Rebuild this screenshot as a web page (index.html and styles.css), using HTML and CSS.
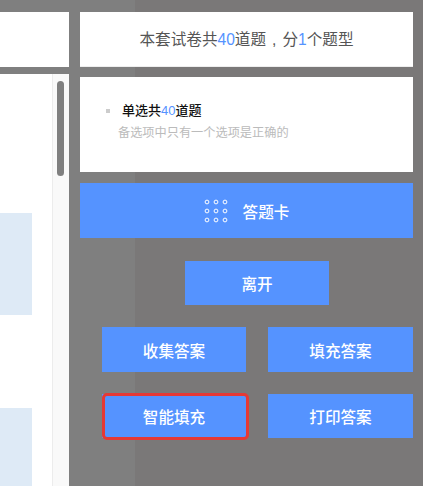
FILE: index.html
```html
<!DOCTYPE html>
<html lang="zh-CN">
<head>
  <meta charset="UTF-8" />
  <meta name="viewport" content="width=device-width, initial-scale=1.0"/>
  <title>答题卡</title>
  <link rel="stylesheet" href="styles.css">
</head>
<body>
  <div class="page">
    <div class="left">
      <div class="paper_head"></div>
      <div class="paper">
        <div class="paper_body">
          <div class="question question_first"></div>
          <div class="question"></div>
        </div>
        <div class="scroll_track">
          <div class="scroll_thumb"></div>
        </div>
      </div>
    </div>

    <div class="right">
      <div class="summary">本套试卷共<span class="num">40</span>道题<span class="comma">,</span>分<span class="num">1</span>个题型</div>

      <div class="types">
        <div class="type_title"><i class="dot"></i>单选共<span class="num">40</span>道题</div>
        <div class="type_desc">备选项中只有一个选项是正确的</div>
      </div>

      <button class="btn card_btn">
        <svg class="grid_icon" width="24" height="24" viewBox="0 0 24 24" fill="none" stroke="#fff" stroke-width="1">
          <circle cx="3" cy="3" r="1.9"/><circle cx="12" cy="3" r="1.9"/><circle cx="21" cy="3" r="1.9"/>
          <circle cx="3" cy="12" r="1.9"/><circle cx="12" cy="12" r="1.9"/><circle cx="21" cy="12" r="1.9"/>
          <circle cx="3" cy="21" r="1.9"/><circle cx="12" cy="21" r="1.9"/><circle cx="21" cy="21" r="1.9"/>
        </svg>
        答题卡
      </button>

      <button class="btn leave_btn">离开</button>

      <div class="actions">
        <button class="btn">收集答案</button>
        <button class="btn">填充答案</button>
        <button class="btn marked">智能填充</button>
        <button class="btn">打印答案</button>
      </div>
    </div>
  </div>
</body>
</html>
```

FILE: styles.css
```css
* {
  box-sizing: border-box;
}
html, body {
  height: 100%;
}
body {
  margin: 0;
  overflow: hidden;
  font-family: "Liberation Sans", "Noto Sans CJK SC", sans-serif;
  background: linear-gradient(to right, #7f7f7f 135px, #7a7878 135px);
}
.page {
  display: grid;
  grid-template-columns: 69px 333px;
  column-gap: 11px;
  height: 100%;
  padding-top: 12px;
}

/* left side, the paper behind the dialog */
.left {
  display: flex;
  flex-direction: column;
  gap: 7px;
  min-height: 0;
}
.paper_head {
  height: 55px;
  background: #fff;
}
.paper {
  flex: 1;
  display: flex;
  background: #fff;
  overflow: hidden;
}
.paper_body {
  width: 52px;
  padding-top: 139px;
}
.question {
  width: 32px;
  height: 102px;
  background: #deeaf6;
}
.question_first {
  margin-bottom: 93px;
}
.scroll_track {
  width: 17px;
  padding: 7px 0 0 4px;
  background: #f9f9f9;
  border-left: 1px solid #ececec;
}
.scroll_thumb {
  width: 7px;
  height: 95px;
  border-radius: 4px;
  background: #7f7f7f;
}

/* right side */
.summary {
  height: 55px;
  background: #fff;
  color: #555;
  font-size: 15.6px;
  line-height: 56px;
  text-align: center;
  border-bottom: 1px solid #eee;
}
.comma {
  padding: 0 6px;
}
.num {
  color: #5593ff;
}
.types {
  height: 95px;
  margin-top: 10px;
  padding: 24px 0 0 38px;
  background: #fff;
}
.type_title {
  position: relative;
  padding-left: 4px;
  color: #111;
  font-size: 13px;
  font-weight: 500;
  line-height: 19px;
}
.dot {
  position: absolute;
  left: -12px;
  top: 8px;
  width: 4px;
  height: 4px;
  background: #ccc;
}
.type_desc {
  margin-top: 4px;
  color: #bbb;
  font-size: 12.2px;
  line-height: 18px;
}
.btn {
  display: block;
  height: 44px;
  padding: 0;
  border: none;
  background: #5593ff;
  color: #fff;
  font-family: inherit;
  font-size: 15.6px;
  font-weight: 500;
  cursor: pointer;
}
.card_btn {
  display: flex;
  align-items: center;
  justify-content: center;
  gap: 15px;
  width: 100%;
  height: 55px;
  margin-top: 11px;
}
.leave_btn {
  width: 144px;
  margin: 23px 0 0 105px;
}
.actions {
  display: grid;
  grid-template-columns: 144px 145px;
  column-gap: 22px;
  row-gap: 22px;
  margin: 22px 0 0 22px;
}
.actions .btn:nth-child(1),
.actions .btn:nth-child(2) {
  height: 45px;
}
.marked {
  position: relative;
}
/* red mark put over the button */
.marked::after {
  content: "";
  position: absolute;
  top: -1px;
  right: -3px;
  bottom: -2px;
  left: 0;
  border: 3px solid #e53935;
  border-radius: 5px;
}
```
